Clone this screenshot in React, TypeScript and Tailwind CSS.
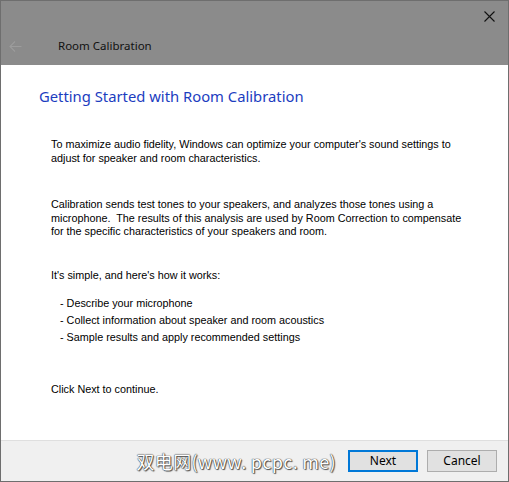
import React from "react";

export default function App() {
  const body = { fontFamily: '"Liberation Sans", Arial, sans-serif' };
  return (
    <div className="w-[509px] h-[482px] flex flex-col border border-[#6e6e6e] bg-white overflow-hidden">
      <div className="h-[64px] bg-[#8b8b8b] flex flex-col shrink-0" style={{ fontFamily: '"Noto Sans", sans-serif' }}>
        <div className="h-[30px] flex justify-end items-center pr-[13px]">
          <svg width="11" height="11" viewBox="0 0 11 11">
            <path d="M0.5 0.5 L10.5 10.5 M10.5 0.5 L0.5 10.5" stroke="#111" strokeWidth="1.1" />
          </svg>
        </div>
        <div className="flex items-center h-[30px]">
          <div className="w-[57px] pl-[8px] flex items-center">
            <svg width="13" height="11" viewBox="0 0 13 11">
              <path d="M6 0.5 L1 5.5 L6 10.5 M1 5.5 L12.5 5.5" stroke="#9c9c9c" strokeWidth="1.1" fill="none" />
            </svg>
          </div>
          <span className="text-[11.5px] text-[#111] leading-none">Room Calibration</span>
        </div>
      </div>
      <div className="flex-1 pl-[38px] pt-[20px]">
        <div className="text-[14.8px] leading-[22px] text-[#1c3dbf]" style={{ fontFamily: '"Noto Sans", sans-serif' }}>
          Getting Started with Room Calibration
        </div>
        <div className="pl-[12px] pt-[30px] text-[10.8px] leading-[13.5px] text-black" style={body}>
          <p className="leading-[14px]">
            To maximize audio fidelity, Windows can optimize your computer's sound settings to
            <br />
            adjust for speaker and room characteristics.
          </p>
          <p className="mt-[33px]">
            Calibration sends test tones to your speakers, and analyzes those tones using a
            <br />
            microphone.&nbsp; The results of this analysis are used by Room Correction to compensate
            <br />
            for the specific characteristics of your speakers and room.
          </p>
          <p className="mt-[30px]">It's simple, and here's how it works:</p>
          <div className="mt-[13px] pl-[9px] flex flex-col leading-[17px]">
            <span>- Describe your microphone</span>
            <span>- Collect information about speaker and room acoustics</span>
            <span>- Sample results and apply recommended settings</span>
          </div>
          <p className="mt-[37px]">Click Next to continue.</p>
        </div>
      </div>
      <div className="h-[41px] shrink-0 bg-[#f0f0f0] border-t border-[#dfdfdf] flex items-center justify-end pr-[11px]">
        <span
          className="text-[18px] text-white mr-[12px] tracking-[0.3px]"
          style={{
            fontFamily: '"Noto Sans CJK SC", "Noto Sans", sans-serif',
            textShadow: "0 0 1px #333, 0 0 1px #333, 1px 1px 1px #555",
          }}
        >
          双电网(www. pcpc. me)
        </span>
        <button
          className="w-[70px] h-[22px] bg-[#e1e1e1] border-2 border-[#0078d7] text-[12px] text-black leading-none"
          style={{ fontFamily: '"Noto Sans", sans-serif' }}
        >
          Next
        </button>
        <button
          className="ml-[9px] w-[70px] h-[22px] bg-[#e1e1e1] border border-[#adadad] text-[12px] text-black leading-none"
          style={{ fontFamily: '"Noto Sans", sans-serif' }}
        >
          Cancel
        </button>
      </div>
    </div>
  );
}
